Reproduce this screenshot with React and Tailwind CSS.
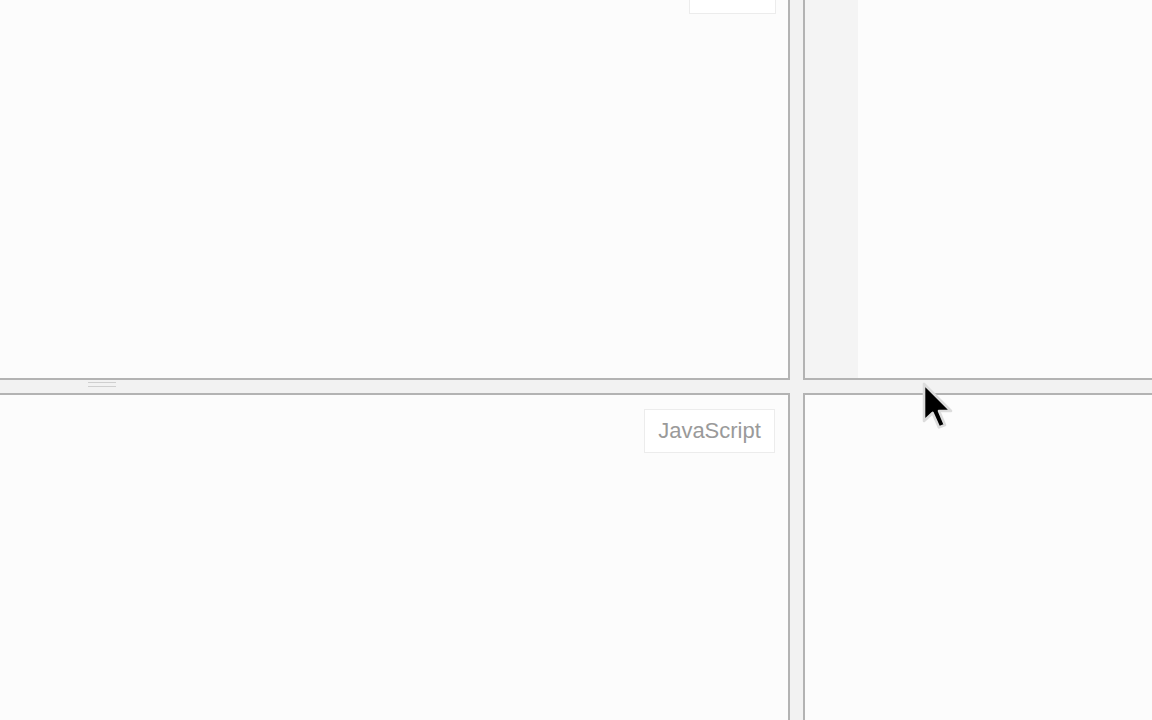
export default function App() {
  return (
    <div className="relative w-[1152px] h-[720px] overflow-hidden bg-[#f2f2f2] flex flex-col" style={{ fontFamily: '"Liberation Sans", Arial, sans-serif' }}>
      <div className="flex h-[380px]">
        <div className="relative w-[790px] h-full bg-[#fcfcfc] border-r-2 border-b-2 border-[#b3b3b3]">
          <div className="absolute right-[12px] top-[-10px] w-[87px] h-[24px] bg-white border border-[#ececec]" />
        </div>
        <div className="w-[13px]" />
        <div className="flex-1 h-full bg-[#fcfcfc] border-l-2 border-b-2 border-[#b3b3b3] flex">
          <div className="w-[53px] h-full bg-[#f4f4f4]" />
        </div>
      </div>
      <div className="relative h-[13px]">
        <div className="absolute left-[88px] top-[2px] w-[28px] flex flex-col gap-[3px]">
          <div className="h-px bg-[#cfcfcf]" />
          <div className="h-px bg-[#cfcfcf]" />
        </div>
      </div>
      <div className="flex flex-1">
        <div className="relative w-[790px] h-full bg-[#fcfcfc] border-r-2 border-t-2 border-[#b3b3b3]">
          <div className="absolute right-[13px] top-[14px] w-[131px] h-[44px] bg-white border border-[#ececec] flex items-center justify-center pb-[2px] text-[22px] text-[#9a9a9a]">
            JavaScript
          </div>
        </div>
        <div className="w-[13px]" />
        <div className="flex-1 h-full bg-[#fcfcfc] border-l-2 border-t-2 border-[#b3b3b3]" />
      </div>
      <svg className="absolute left-[919px] top-[379px]" width="38" height="54" viewBox="0 0 19 27">
        <path d="M2.5 2.5 L2.5 21 L6.8 17 L10 24.2 L13 23 L10 16 L16 16 Z" fill="#000" stroke="#dcdcdc" strokeWidth="1.3" strokeLinejoin="round" />
      </svg>
    </div>
  );
}
